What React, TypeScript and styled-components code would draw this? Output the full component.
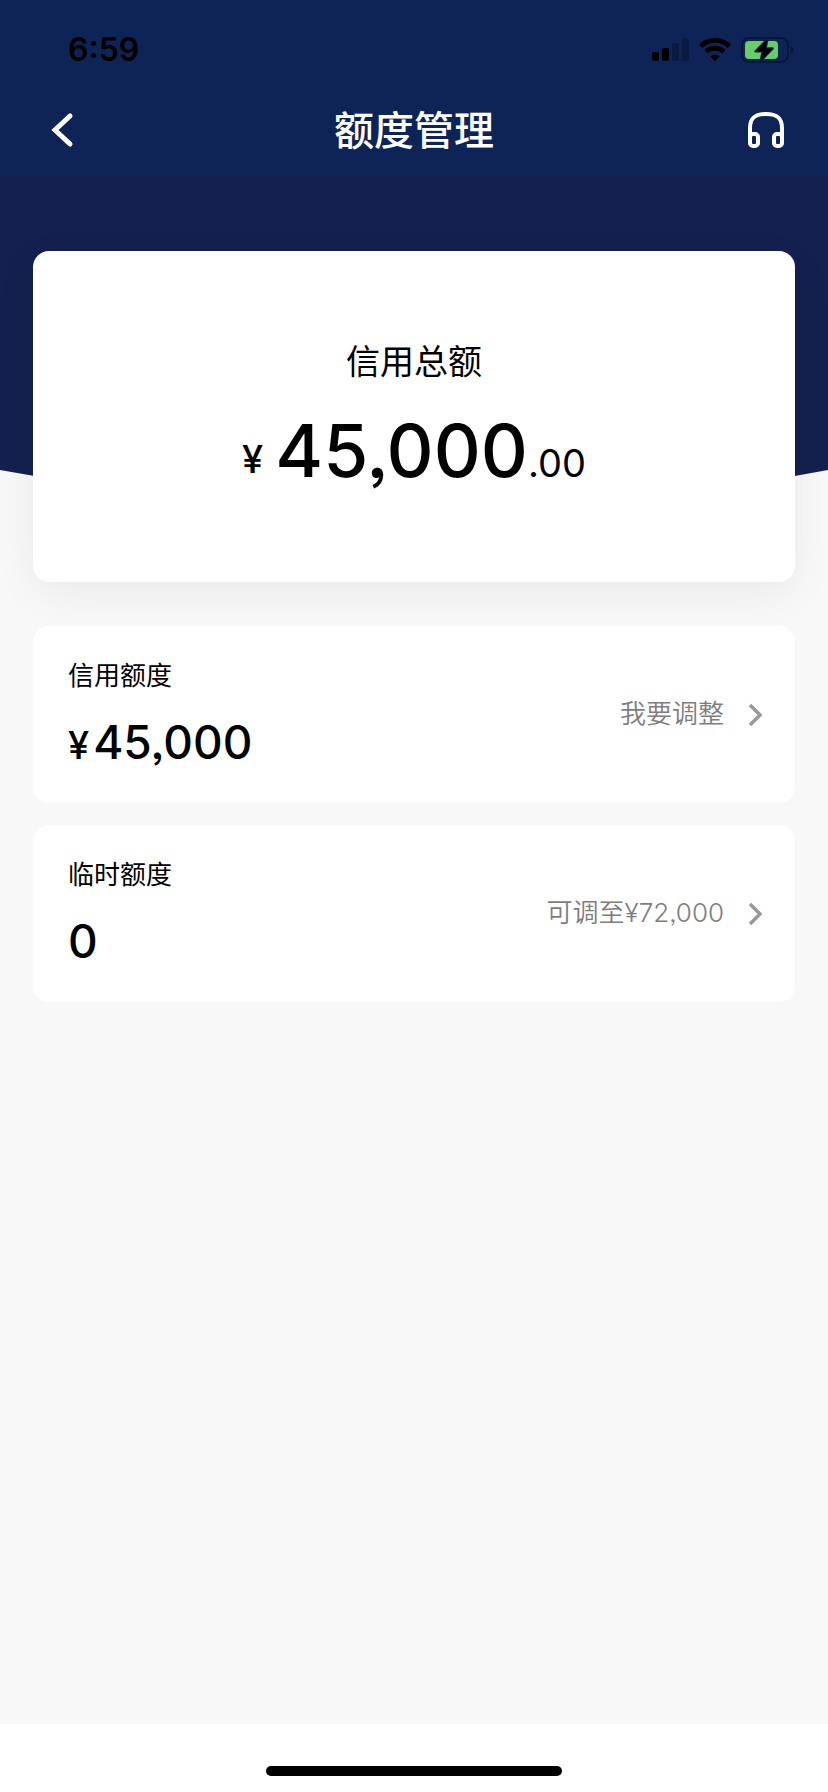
import React from "react";
import styled, { createGlobalStyle } from "styled-components";

const GlobalStyle = createGlobalStyle`
  * { box-sizing: border-box; }
  body {
    margin: 0;
    background: #f8f8f8;
    color: #000;
    font-family: Inter, "Noto Sans CJK SC", sans-serif;
    font-feature-settings: "ss03";
  }
  button { font: inherit; font-feature-settings: inherit; border: 0; padding: 0; background: none; cursor: pointer; }
  h1, h2, p { margin: 0; font-weight: 400; }
  svg { display: block; }
`;

const Page = styled.div`
  min-height: 100vh;
  display: flex;
  flex-direction: column;
`;

const Header = styled.header`
  background: #0e2456;
`;

const StatusBar = styled.div`
  display: flex;
  justify-content: space-between;
  align-items: center;
  height: 84px;
  padding: 16px 34px 0 68px;
`;

const Time = styled.time`
  font-size: 32px;
  line-height: 40px;
  font-weight: 600;
`;

const StatusIcons = styled.div`
  display: flex;
  align-items: center;
  gap: 10px;
`;

const NavBar = styled.nav`
  display: grid;
  grid-template-columns: 1fr auto 1fr;
  align-items: center;
  height: 92px;
  padding: 0 40px;
`;

const Title = styled.h1`
  padding-top: 2px;
  color: #fff;
  font-size: 40px;
  line-height: 60px;
  font-weight: 500;
`;

const NavButton = styled.button<{ $end?: boolean }>`
  color: #fff;
  justify-self: ${(p) => (p.$end ? "end" : "start")};
`;

const Main = styled.main`
  flex: 1;
  display: flex;
  flex-direction: column;
  padding: 75px 33px 40px;
  position: relative;
  isolation: isolate;
`;

const Backdrop = styled.svg`
  position: absolute;
  inset: 0 0 auto;
  width: 100%;
  height: 336px;
  z-index: -1;
`;

const TotalCard = styled.section`
  display: flex;
  flex-direction: column;
  align-items: center;
  min-height: 331px;
  padding: 85px 32px 64px;
  margin-bottom: 44px;
  border-radius: 16px;
  background: #fff;
  box-shadow: 0 12px 44px rgba(0, 0, 0, 0.06);
`;

const TotalLabel = styled.h2`
  font-size: 34px;
  line-height: 52px;
`;

const Total = styled.p`
  margin-top: 18px;
  font-size: 73px;
  line-height: 90px;
  font-weight: 500;
`;

const Yen = styled.span<{ $gap: number; $raise?: number }>`
  font-size: 38px;
  line-height: 40px;
  font-weight: 500;
  margin-right: ${(p) => p.$gap}px;
  vertical-align: ${(p) => p.$raise ?? 0}px;
`;

const Cents = styled.span`
  font-size: 38px;
  font-weight: 400;
`;

const List = styled.div`
  display: flex;
  flex-direction: column;
  gap: 22px;
`;

const Row = styled.button`
  display: flex;
  justify-content: space-between;
  align-items: center;
  min-height: 177px;
  padding: 28px 33px 30px 35px;
  border-radius: 16px;
  background: #fff;
  color: #000;
  text-align: left;
`;

const RowText = styled.span`
  display: flex;
  flex-direction: column;
  gap: 16px;
`;

const RowLabel = styled.span`
  font-size: 26px;
  line-height: 40px;
`;

const RowAmount = styled.span`
  font-size: 46px;
  line-height: 60px;
  font-weight: 500;
`;

const RowAction = styled.span`
  display: flex;
  align-items: center;
  gap: 24px;
  color: #7d7d7d;
  font-size: 26px;
  line-height: 40px;
  font-weight: 350;
`;

const HomeArea = styled.footer`
  display: flex;
  justify-content: center;
  height: 68px;
  padding-top: 42px;
  background: #fff;
`;

const HomeBar = styled.div`
  width: 296px;
  height: 10px;
  border-radius: 5px;
  background: #000;
`;

const Signal = () => (
  <svg width="38" height="24" viewBox="0 0 38 24" aria-hidden="true">
    <rect x="1" y="14" width="7" height="9" rx="2" />
    <rect x="11" y="10" width="7" height="13" rx="2" />
    <g opacity="0.22">
      <rect x="21" y="5" width="7" height="18" rx="2" />
      <rect x="31" y="0" width="7" height="23" rx="2" />
    </g>
  </svg>
);

const Wifi = () => (
  <svg width="32" height="24" viewBox="0 0 32 24" aria-hidden="true">
    <g fill="none" stroke="#000" strokeWidth="4.8">
      <path d="M1.600 8.200C10 .4 22 .4 30.400 8.200" />
      <path d="M7 13.800C12.400 9 19.600 9 25 13.800" />
    </g>
    <path d="M11.400 18.400Q16 14.600 20.600 18.400L16 23.200Z" />
  </svg>
);

const Battery = () => (
  <svg width="53" height="26" viewBox="0 0 53 26" aria-hidden="true">
    <rect x="1" y="1" width="46" height="24" rx="7" fill="none" stroke="#081637" strokeWidth="2" />
    <path d="M49.500 9C53.500 10.500 53.500 15.500 49.500 17Z" fill="#081637" />
    <rect x="4" y="4" width="33" height="18" rx="4" fill="#67ce67" />
    <path
      d="M26.500 2L14.500 14.400H21.800L19.500 24L31.700 11.400H24.500Z"
      stroke="#0e2456"
      strokeWidth="2.400"
      strokeLinejoin="round"
      paintOrder="stroke"
    />
  </svg>
);

const BackIcon = () => (
  <svg width="44" height="44" viewBox="0 0 44 44" aria-hidden="true">
    <path d="M30 8L15 22L30 36" fill="none" stroke="currentColor" strokeWidth="5" strokeLinecap="round" />
  </svg>
);

const HeadphoneIcon = () => (
  <svg width="44" height="44" viewBox="0 0 44 44" fill="none" stroke="currentColor" strokeWidth="4" aria-hidden="true">
    <path d="M6 30V20C6 9 12 6 22 6S38 9 38 20V30" />
    <rect x="6" y="26" width="8" height="12" rx="3" />
    <rect x="30" y="26" width="8" height="12" rx="3" />
  </svg>
);

const Chevron = () => (
  <svg width="14" height="24" viewBox="0 0 14 24" aria-hidden="true">
    <path d="M2 3L12 13L2 23" fill="none" stroke="#999" strokeWidth="3.500" />
  </svg>
);

type LimitProps = { label: string; amount: string; yen?: boolean; action: string };

const LimitRow = ({ label, amount, yen, action }: LimitProps) => (
  <Row type="button">
    <RowText>
      <RowLabel>{label}</RowLabel>
      <RowAmount>
        {yen && <Yen $gap={4}>¥</Yen>}
        {amount}
      </RowAmount>
    </RowText>
    <RowAction>
      {action}
      <Chevron />
    </RowAction>
  </Row>
);

export default function App() {
  return (
    <>
      <GlobalStyle />
      <Page>
        <Header>
          <StatusBar>
            <Time>6:59</Time>
            <StatusIcons>
              <Signal />
              <Wifi />
              <Battery />
            </StatusIcons>
          </StatusBar>
          <NavBar>
            <NavButton type="button" aria-label="返回">
              <BackIcon />
            </NavButton>
            <Title>额度管理</Title>
            <NavButton type="button" aria-label="客服" $end>
              <HeadphoneIcon />
            </NavButton>
          </NavBar>
        </Header>
        <Main>
          <Backdrop viewBox="0 0 828 336" preserveAspectRatio="none" aria-hidden="true">
            <path d="M0 0H828V294Q414 372 0 294Z" fill="#142150" />
          </Backdrop>
          <TotalCard>
            <TotalLabel>信用总额</TotalLabel>
            <Total>
              <Yen $gap={12} $raise={4}>¥</Yen>
              45,000
              <Cents>.00</Cents>
            </Total>
          </TotalCard>
          <List>
            <LimitRow label="信用额度" yen amount="45,000" action="我要调整" />
            <LimitRow label="临时额度" amount="0" action="可调至¥72,000" />
          </List>
        </Main>
        <HomeArea>
          <HomeBar />
        </HomeArea>
      </Page>
    </>
  );
}
